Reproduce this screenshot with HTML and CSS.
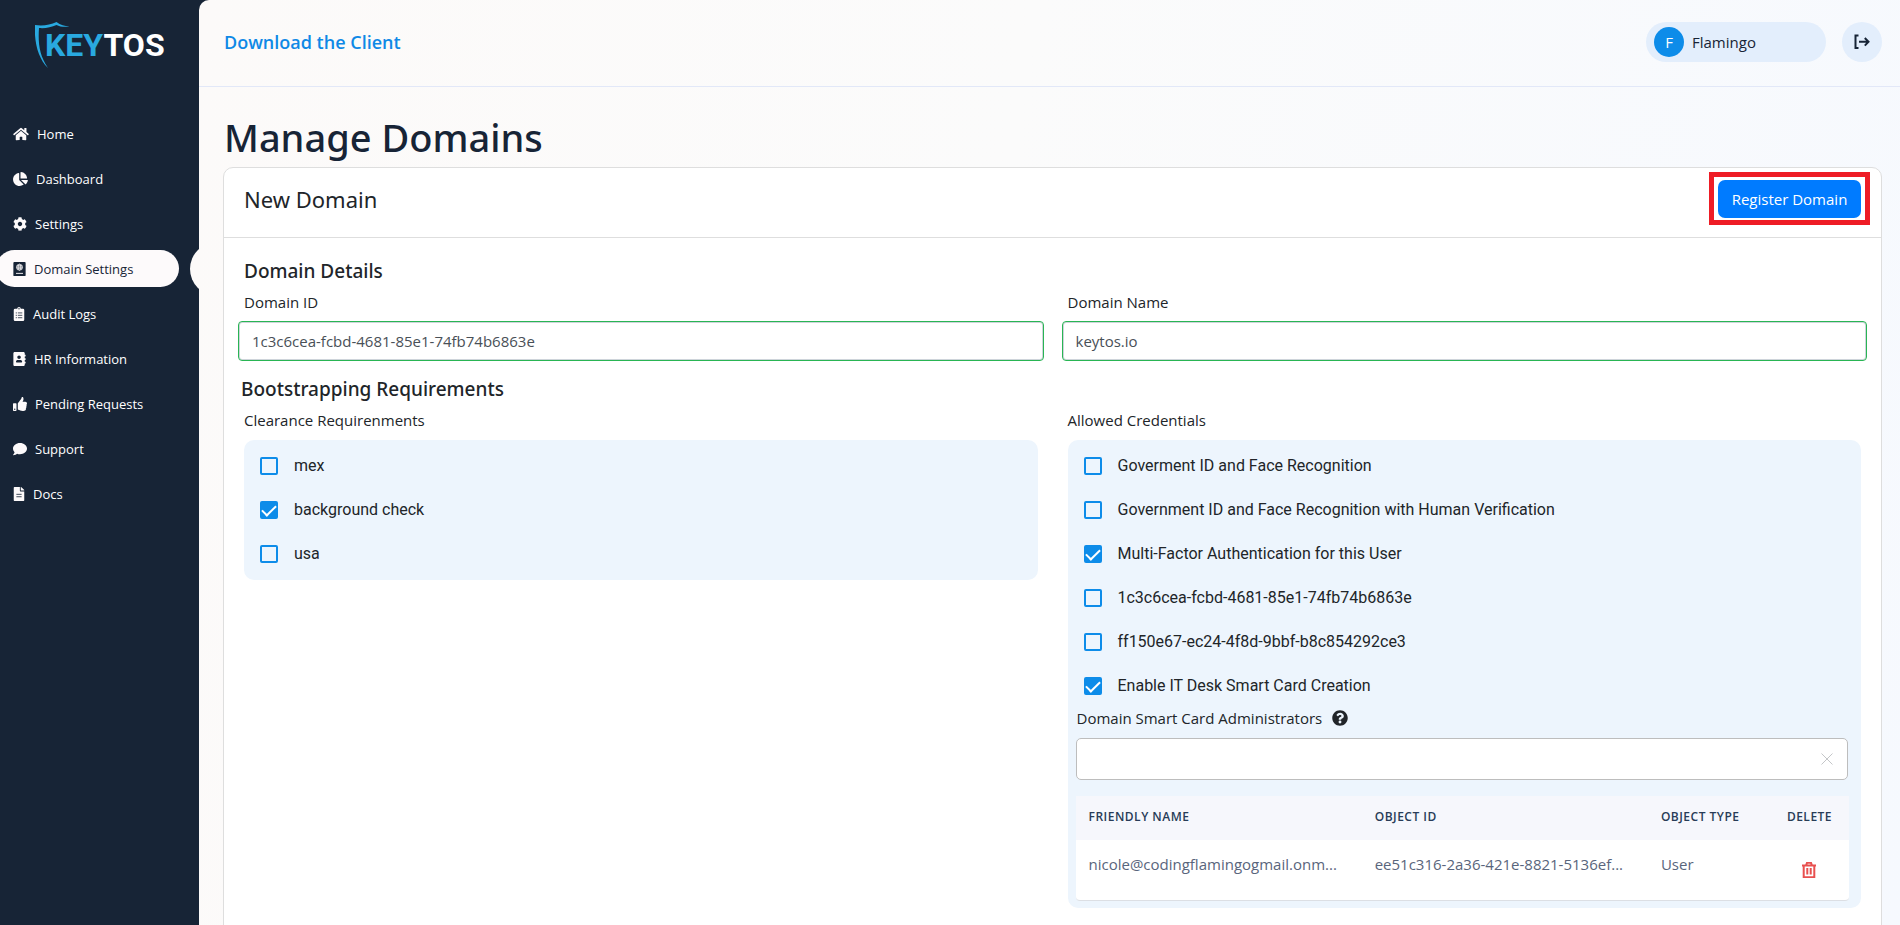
FILE: index.html
```html
<!DOCTYPE html>
<html lang="en">
<head>
<meta charset="utf-8">
<title>Manage Domains</title>
<link rel="stylesheet" href="styles.css">
</head>
<body>
<div class="app">
  <aside class="sidebar">
    <div class="logo">
      <svg class="logo-shield" viewBox="0 0 36 46" aria-hidden="true"><path d="M0 3C8 4 15 3 21.500 0c4 3 8 4 13 4.500-5 .8-9.500.3-13-1.500C16 5.500 10 6.500 4 6 3 20 4 33 13 46 3 36-1 20 0 3z"/></svg>
      <span class="logo-text"><span class="logo-key">KEY</span>TOS</span>
    </div>
    <nav class="nav">
      <a class="nav-item" href="#"><svg class="w16" viewBox="0 0 576 512"><path d="M280.400 148.300 96 300.100V464a16 16 0 0 0 16 16l112-.3a16 16 0 0 0 16-16V368a16 16 0 0 1 16-16h64a16 16 0 0 1 16 16v95.600a16 16 0 0 0 16 16.100l112 .3a16 16 0 0 0 16-16V300L295.700 148.300a12.200 12.200 0 0 0-15.300 0zM571.600 251.500 488 182.600V44a12 12 0 0 0-12-12h-56a12 12 0 0 0-12 12v72.600L318.500 43a48 48 0 0 0-61 0L4.300 251.500a12 12 0 0 0-1.600 16.900l25.500 31a12 12 0 0 0 16.900 1.600L280.400 107.200a12.200 12.200 0 0 1 15.300 0L530.900 301a12 12 0 0 0 16.900-1.600l25.500-31a12 12 0 0 0-1.700-16.900z"/></svg>Home</a>
      <a class="nav-item" href="#"><svg class="w15" viewBox="0 0 544 512"><path d="M527.800 288H290.500l158 158c6 6 15.900 6.500 22.200.7 38.700-36.500 65.300-85.600 73.100-140.900 1.400-9.500-6.400-17.800-16-17.800zm-15.800-64.800C503.700 103.700 408.300 8.300 288.800 0 279.700-.6 272 7.100 272 16.200V240h223.800c9.100 0 16.800-7.700 16.200-16.800zM224 288V50.700c0-9.600-8.300-17.400-17.800-16C86.200 51.600-4.500 155.900.2 280.400 5 408.100 114.600 513.600 242.500 512c50.200-.6 96.700-16.800 134.800-44 7.900-5.600 8.400-17.200 1.600-23.900z"/></svg>Dashboard</a>
      <a class="nav-item" href="#"><svg class="w14" viewBox="0 0 512 512"><path d="M487.400 315.700l-42.600-24.600c4.300-23.200 4.300-47 0-70.200l42.600-24.600c4.900-2.800 7.100-8.600 5.500-14-11.100-35.600-30-67.800-54.700-94.600-3.800-4.100-10-5.100-14.800-2.300L380.800 110c-17.900-15.400-38.500-27.300-60.800-35.100V25.800c0-5.600-3.900-10.500-9.400-11.700-36.700-8.200-74.300-7.800-109.200 0-5.500 1.200-9.400 6.100-9.400 11.700V75c-22.200 7.900-42.800 19.800-60.800 35.100L88.700 85.500c-4.900-2.800-11-1.900-14.800 2.300-24.700 26.700-43.600 58.900-54.700 94.600-1.700 5.400.6 11.200 5.500 14L67.300 221c-4.300 23.200-4.300 47 0 70.200l-42.600 24.600c-4.900 2.800-7.100 8.600-5.500 14 11.100 35.600 30 67.800 54.700 94.600 3.800 4.100 10 5.100 14.800 2.300l42.600-24.600c17.900 15.400 38.500 27.300 60.800 35.100v49.200c0 5.600 3.900 10.500 9.400 11.700 36.700 8.200 74.300 7.800 109.200 0 5.500-1.200 9.400-6.100 9.400-11.700v-49.200c22.200-7.900 42.800-19.800 60.800-35.100l42.600 24.600c4.900 2.800 11 1.900 14.800-2.300 24.700-26.700 43.600-58.900 54.700-94.600 1.500-5.500-.7-11.300-5.600-14.100zM256 336c-44.100 0-80-35.900-80-80s35.900-80 80-80 80 35.900 80 80-35.900 80-80 80z"/></svg>Settings</a>
      <a class="nav-item active" href="#" aria-current="page"><svg class="w13" viewBox="0 0 448 512"><path d="M32 0h384a32 32 0 0 1 32 32v448a32 32 0 0 1-32 32H32a32 32 0 0 1-32-32V32A32 32 0 0 1 32 0z"/><g fill="none" stroke="#fdfafb" stroke-width="22"><circle cx="224" cy="192" r="112" fill="#fdfafb" fill-opacity=".35"/><ellipse cx="224" cy="192" rx="46" ry="112"/><path d="M112 192h224M128 138h192M128 246h192"/><path d="M96 416h256" stroke-width="34"/></g></svg>Domain Settings</a>
      <a class="nav-item" href="#"><svg class="w12" viewBox="0 0 384 512"><path d="M336 64h-80a64 64 0 0 0-128 0H48a48 48 0 0 0-48 48v352a48 48 0 0 0 48 48h288a48 48 0 0 0 48-48V112a48 48 0 0 0-48-48zM192 40a24 24 0 1 1 0 48 24 24 0 0 1 0-48z"/><path d="M72 216h44M72 304h44M72 392h44M150 216h162M150 304h162M150 392h162" stroke="#172436" stroke-width="28"/></svg>Audit Logs</a>
      <a class="nav-item" href="#"><svg class="w13" viewBox="0 0 448 512"><path d="M436 160c6.600 0 12-5.400 12-12v-40c0-6.600-5.400-12-12-12h-20V48c0-26.500-21.500-48-48-48H48C21.500 0 0 21.500 0 48v416c0 26.500 21.500 48 48 48h320c26.500 0 48-21.500 48-48v-48h20c6.600 0 12-5.400 12-12v-40c0-6.600-5.400-12-12-12h-20v-64h20c6.600 0 12-5.400 12-12v-40c0-6.600-5.400-12-12-12h-20v-64zM208 128c35.300 0 64 28.700 64 64s-28.700 64-64 64-64-28.700-64-64 28.700-64 64-64zm112 236.800c0 10.600-10 19.200-22.400 19.200H118.400C106 384 96 375.400 96 364.800v-19.200c0-31.800 30.100-57.600 67.200-57.600h5c25 10.700 54.600 10.700 79.600 0h5c37.100 0 67.200 25.800 67.200 57.600z"/></svg>HR Information</a>
      <a class="nav-item" href="#"><svg class="w14" viewBox="0 0 512 512"><path d="M104 224H24c-13.300 0-24 10.700-24 24v240c0 13.300 10.700 24 24 24h80c13.300 0 24-10.700 24-24V248c0-13.300-10.700-24-24-24zM64 472a24 24 0 1 1 0-48 24 24 0 0 1 0 48zM384 81.500c0 42.400-26 66.200-33.300 94.500h101.700c33.400 0 59.400 27.700 59.600 58.100.1 17.900-7.500 37.200-19.400 49.200 9.300 22 8.500 52.900-8.100 75.100 8.200 24.500-.1 54.600-15.500 70.700 4.100 16.600 2.100 30.700-5.800 42.200-19.500 28-67.700 40.700-112.400 40.700-60 0-115.500-34-158.800-44.600-9.500-2.300-16-9-16-18V235.800c0-6.500 2.600-12.600 7.300-17.100 48.500-47.900 69.300-98.700 109.100-138.500 14.600-14.600 19.900-36.600 25-57.900C321.700 4.200 330.800 0 344 0c24 0 40 20.500 40 81.500z"/></svg>Pending Requests</a>
      <a class="nav-item" href="#"><svg class="w14" viewBox="0 0 512 512"><path d="M256 32C114.600 32 0 125.100 0 240c0 49.600 21.400 95 57 130.700C44.500 421.100 2.700 466 2.200 466.500A8 8 0 0 0 8 480c66.300 0 116-31.800 140.600-51.400A305 305 0 0 0 256 448c141.400 0 256-93.100 256-208S397.400 32 256 32z"/></svg>Support</a>
      <a class="nav-item" href="#"><svg class="w12" viewBox="0 0 384 512"><path d="M224 136V0H24C10.700 0 0 10.700 0 24v464c0 13.300 10.700 24 24 24h336c13.300 0 24-10.700 24-24V160H248c-13.200 0-24-10.800-24-24zm160-14.100v6.100H256V0h6.100c6.400 0 12.500 2.500 17 7l97.900 98c4.500 4.500 7 10.600 7 16.900z"/><path d="M96 268h192M96 356h192" stroke="#172436" stroke-width="30"/></svg>Docs</a>
    </nav>
  </aside>

  <div class="page">
    <header class="topbar">
      <a class="download" href="#">Download the Client</a>
      <div class="account">
        <div class="user"><span class="avatar">F</span>Flamingo</div>
        <button class="logout" type="button" aria-label="Log out"><svg viewBox="0 0 16 16"><path d="M4.500 1.500H1.500v12.500h3M5 7.800h9M10.800 4l3.700 3.800-3.700 3.800"/></svg></button>
      </div>
    </header>

    <main class="content">
      <h1>Manage Domains</h1>
      <section class="card">
        <div class="card-head">
          <h2>New Domain</h2>
          <div class="callout"><button class="primary" type="button">Register Domain</button></div>
        </div>
        <form class="card-body">
          <h3>Domain Details</h3>
          <div class="columns">
            <div class="field">
              <label class="caption" for="domain-id">Domain ID</label>
              <input class="text valid" id="domain-id" type="text" value="1c3c6cea-fcbd-4681-85e1-74fb74b6863e">
            </div>
            <div class="field">
              <label class="caption" for="domain-name">Domain Name</label>
              <input class="text valid" id="domain-name" type="text" value="keytos.io">
            </div>
          </div>
          <h3 class="second">Bootstrapping Requirements</h3>
          <div class="columns">
            <div class="field">
              <span class="caption">Clearance Requirenments</span>
              <div class="panel">
                <label class="check"><input type="checkbox">mex</label>
                <label class="check"><input type="checkbox" checked>background check</label>
                <label class="check"><input type="checkbox">usa</label>
              </div>
            </div>
            <div class="field">
              <span class="caption">Allowed Credentials</span>
              <div class="panel">
                <label class="check"><input type="checkbox">Goverment ID and Face Recognition</label>
                <label class="check"><input type="checkbox">Government ID and Face Recognition with Human Verification</label>
                <label class="check"><input type="checkbox" checked>Multi-Factor Authentication for this User</label>
                <label class="check"><input type="checkbox">1c3c6cea-fcbd-4681-85e1-74fb74b6863e</label>
                <label class="check"><input type="checkbox">ff150e67-ec24-4f8d-9bbf-b8c854292ce3</label>
                <label class="check"><input type="checkbox" checked>Enable IT Desk Smart Card Creation</label>
                <div class="admins">
                  <div class="admins-label">
                    <label for="admins">Domain Smart Card Administrators</label>
                    <svg viewBox="0 0 512 512" aria-hidden="true"><path d="M504 256c0 137-111 248-248 248S8 393 8 256C8 119.100 119 8 256 8s248 111.100 248 248zM262.700 90c-54.500 0-89.300 23-116.500 63.800-3.500 5.300-2.400 12.400 2.700 16.300l34.700 26.300c5.200 3.900 12.600 3 16.700-2.100 17.900-22.700 30.100-35.800 57.300-35.800 20.400 0 45.700 13.100 45.700 33 0 15-12.400 22.700-32.500 34C247.100 238.500 216 254.900 216 296v4c0 6.600 5.400 12 12 12h56c6.600 0 12-5.400 12-12v-1.300c0-28.500 83.200-29.600 83.200-106.700 0-58-60.200-102-116.500-102zM256 338a46 46 0 1 0 0 92 46 46 0 0 0 0-92z"/></svg>
                  </div>
                  <div class="search">
                    <input id="admins" type="text">
                    <button type="button" aria-label="Clear"><svg viewBox="0 0 12 12"><path d="M.5.5l11 11M11.500.5l-11 11"/></svg></button>
                  </div>
                  <table>
                    <thead>
                      <tr><th class="wide">Friendly Name</th><th class="wide">Object ID</th><th class="type">Object Type</th><th>Delete</th></tr>
                    </thead>
                    <tbody>
                      <tr>
                        <td>nicole@codingflamingogmail.onm...</td>
                        <td>ee51c316-2a36-421e-8821-5136ef...</td>
                        <td>User</td>
                        <td><button class="trash" type="button" aria-label="Delete"><svg viewBox="0 0 14 16"><path d="M0 3.500h14M4 3.500l1-2.700h4l1 2.700M1.700 3.500v11.700h10.600V3.500M5.300 6v6.500M8.700 6v6.500"/></svg></button></td>
                      </tr>
                    </tbody>
                  </table>
                </div>
              </div>
            </div>
          </div>
        </form>
      </section>
    </main>
  </div>
</div>
</body>
</html>
```
FILE: styles.css
```css
* { box-sizing: border-box; }

body {
  margin: 0;
  font: 15px/24px "Open Sans", "Noto Sans", sans-serif;
  color: #212529;
}

button, input { font: inherit; }
button { border: 0; padding: 0; background: none; cursor: pointer; }
a { text-decoration: none; }
svg { display: block; }

.app {
  display: flex;
  height: 100vh;
  overflow: hidden;
  background: #172436;
}

/* Sidebar */
.sidebar { flex: 0 0 199px; }

.logo {
  display: flex;
  height: 68px;
  margin-bottom: 47px;
  padding: 22px 0 0 35px;
}
.logo-shield { width: 36px; height: 46px; fill: #29a9e0; }
.logo-text {
  margin-left: -26px;
  font: 700 32px/46px Roboto, sans-serif;
  color: #fff;
}
.logo-key { color: #29a9e0; }

.nav { display: flex; flex-direction: column; gap: 8px; padding-right: 20px; }
.nav-item {
  display: flex;
  align-items: center;
  gap: 8px;
  height: 37px;
  padding-left: 13px;
  font-size: 13px;
  color: #fff;
}
.nav-item svg { height: 14px; fill: #fdfafb; }
.w16 { width: 16px; }
.w15 { width: 15px; }
.w14 { width: 14px; }
.w13 { width: 13px; }
.w12 { width: 12px; }
.nav-item.active {
  position: relative;
  margin-left: -4px;
  padding-left: 17px;
  border-radius: 19px;
  background: #fdfafb;
  color: #172436;
}
.nav-item.active svg { fill: #172436; }
.nav-item.active::after {
  content: "";
  position: absolute;
  top: -8px;
  right: -65px;
  width: 54px;
  height: 54px;
  border-radius: 50%;
  background: #fcfaf9;
}

/* Page */
.page {
  position: relative;
  flex: 1;
  min-width: 0;
  border-top-left-radius: 10px;
  background: linear-gradient(100deg, #fcfaf9 0%, #fbfbfb 45%, #f6f9fe 100%);
}

.topbar {
  display: flex;
  align-items: center;
  justify-content: space-between;
  height: 87px;
  padding: 0 18px 2px 25px;
  border-bottom: 1px solid #e2e8f8;
}
.download { font-size: 18px; font-weight: 600; color: #0f89e6; }
.account { display: flex; gap: 16px; }
.user {
  display: flex;
  align-items: center;
  gap: 8px;
  width: 180px;
  height: 40px;
  padding-left: 8px;
  border-radius: 20px;
  background: #e3eefc;
  color: #172436;
}
.avatar {
  width: 30px;
  border-radius: 50%;
  background: #0d8ce9;
  color: #fff;
  line-height: 30px;
  text-align: center;
}
.logout {
  display: grid;
  place-items: center;
  width: 40px;
  height: 40px;
  border-radius: 50%;
  background: #e3eefc;
}
.logout svg {
  width: 16px;
  height: 16px;
  fill: none;
  stroke: #172436;
  stroke-width: 2;
}

.content { padding: 26px 18px 0 24px; }

h1, h2, h3 { margin: 0; font-family: "Noto Sans", "Open Sans", sans-serif; font-weight: 500; }
h1 { padding: 0 0 6px 1px; font-size: 38px; line-height: 48px; color: #172436; }

.card {
  min-height: 800px;
  border: 1px solid #dedede;
  border-radius: 10px;
  background: #fff;
}
.card-head {
  display: flex;
  justify-content: space-between;
  align-items: flex-start;
  height: 70px;
  padding: 4px 11px 0 20px;
  border-bottom: 1px solid #dedede;
}
h2 { padding-top: 11px; font-size: 22px; font-weight: 400; line-height: 32px; }
.callout { padding: 3px 4px 2px; border: 5px solid #ee1c25; }
.primary {
  display: block;
  width: 143px;
  height: 38px;
  border-radius: 7px;
  background: #007bff;
  color: #fff;
}

.card-body { padding: 19px 14px 24px; }
h3 { margin-bottom: 5px; padding-left: 6px; font-size: 19px; line-height: 28px; }
h3.second { margin-top: 14px; padding-left: 3px; }

.columns { display: grid; grid-template-columns: 1fr 1fr; gap: 18px; }
.caption { display: block; margin-bottom: 7px; padding-left: 6px; }
span.caption { margin-bottom: 8px; }

.text {
  display: block;
  width: 100%;
  height: 40px;
  padding: 0 13px;
  border: 1px solid #29b554;
  border-radius: 4px;
  box-shadow: inset 0 0 0 1px #ced4da;
  color: #495057;
}

.panel {
  margin: 0 6px;
  padding: 4px 0;
  border-radius: 10px;
  background: #edf5fd;
}
.check {
  display: flex;
  align-items: center;
  gap: 16px;
  height: 44px;
  padding-left: 16px;
  font-family: Roboto, sans-serif;
  font-size: 16px;
}
.check input {
  appearance: none;
  display: grid;
  place-items: center;
  width: 18px;
  height: 18px;
  margin: 0;
  border: 2px solid #0d8ce9;
  border-radius: 2px;
}
.check input:checked { background: #0d8ce9; }
.check input:checked::before {
  content: "";
  width: 12px;
  height: 6px;
  margin-bottom: 3px;
  border: solid #fff;
  border-width: 0 0 2px 2px;
  transform: rotate(-45deg);
}

.admins { padding: 0 12px 3px 8px; }
.admins-label {
  display: flex;
  align-items: center;
  gap: 10px;
  height: 20px;
  margin-bottom: 10px;
  padding-left: 1px;
}
.admins-label svg { width: 16px; height: 16px; fill: #212529; }

.search {
  display: flex;
  align-items: center;
  height: 42px;
  margin: 0 1px 16px 0;
  padding-right: 14px;
  border: 1px solid #bdbdbd;
  border-radius: 5px;
  background: #fff;
}
.search input { flex: 1; border: 0; padding: 0 12px; outline: 0; background: none; }
.search svg { width: 12px; height: 12px; stroke: #c4c6c8; }

table {
  width: 100%;
  table-layout: fixed;
  border-spacing: 0;
  border-bottom: 1px solid #dcdfe4;
  border-radius: 4px;
  background: #fff;
}
th {
  height: 44px;
  padding: 0 0 2px 13px;
  background: #f6f7fc;
  color: #283c57;
  font-size: 12px;
  font-weight: 600;
  letter-spacing: 0.5px;
  text-align: left;
  text-transform: uppercase;
}
.wide { width: 37%; }
.type { width: 126px; }
td {
  height: 60px;
  padding: 0 0 12px 13px;
  color: #59657c;
  white-space: nowrap;
}
.trash { display: block; margin: 12px 0 0 15px; }
.trash svg { width: 14px; height: 16px; fill: none; stroke: #e8504f; stroke-width: 2; }
```
